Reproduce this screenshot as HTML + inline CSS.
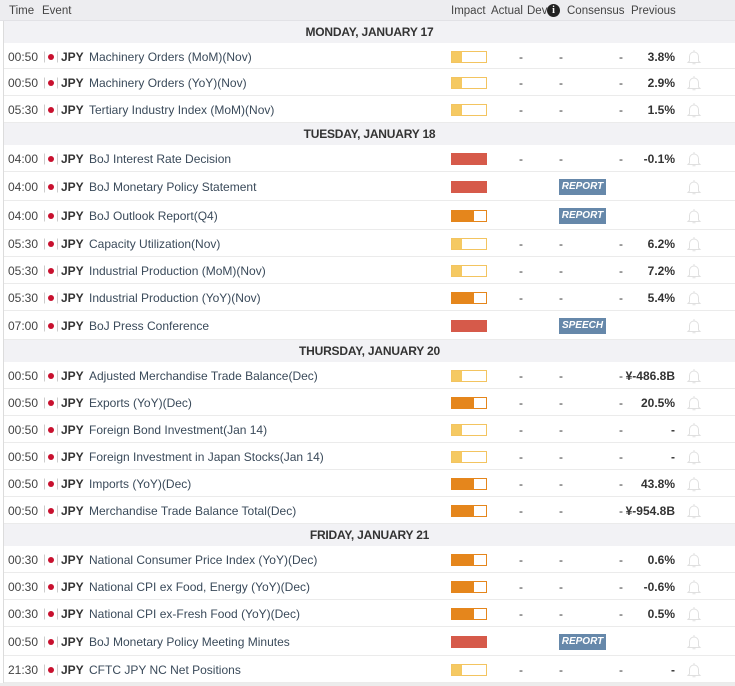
<!DOCTYPE html>
<html><head><meta charset="utf-8"><style>
*{margin:0;padding:0;box-sizing:border-box}
body{width:735px;height:686px;background:#fff;font-family:"Liberation Sans",Arial,sans-serif;font-size:12px;color:#333;position:relative;overflow:hidden}
.hdr{position:absolute;left:0;top:0;width:735px;height:21px;background:#ededf0;border-bottom:1px solid #e2e2e6;color:#444;font-size:11.5px}
.hdr span{position:absolute;top:5px}
.wrap{position:absolute;left:3px;top:21px;width:732px;height:662px;border-left:1px solid #dcdcdc;background:#fff}
.date{position:absolute;left:4px;width:731px;height:22px;background:#f2f2f5;text-align:center;font-weight:bold;font-size:12px;line-height:23px;color:#333;letter-spacing:-0.2px}
.row{position:absolute;left:4px;width:731px;border-bottom:1px solid #ebebeb}
.row>*{position:absolute;top:calc(50% + 1px);transform:translateY(-50%)}
.t{left:4px;color:#444}
.sep{left:40px;width:1px;height:11px;background:#ccc}
.dot{left:44px;width:6px;height:6px;border-radius:50%;background:#c8102e}
.sep2{left:53px;width:1px;height:11px;background:#ccc}
.c{left:57px;font-weight:bold;color:#333}
.e{left:85px;color:#3a4a5a}
.bar{left:447px;width:36px;height:12px}
.low{border:1.5px solid #f3c460;background:linear-gradient(90deg,#f5c962 10px,#fff 10px)}
.med{border:1.5px solid #e5861c;background:linear-gradient(90deg,#e5861c 22px,#fff 22px)}
.high{background:#d65a4a}
.d1{left:515px}.d2{left:555px}.d3{left:615px}
.p{right:60px;font-weight:bold;color:#333}
.b{left:555px;width:47px;height:16px;background:#6688aa;color:#fff;font-style:italic;font-weight:bold;font-size:10px;line-height:16px;text-align:center}
.bell{left:682px;width:16px;height:17px}
</style></head><body>
<div class="hdr"><span style="left:9px">Time</span><span style="left:42px">Event</span><span style="left:451px">Impact</span><span style="left:491px">Actual</span><span style="left:527px">Dev</span>
<span style="left:547px;top:4px;width:13px;height:13px;border-radius:50%;background:#222;color:#fff;font-weight:bold;font-size:10px;text-align:center;line-height:13px;font-family:'Liberation Serif',serif">i</span>
<span style="left:567px">Consensus</span><span style="left:631px">Previous</span></div>
<div class="wrap"></div>
<div id="c"></div>
<script>
var bell='<svg class="bell" viewBox="0 0 16 17"><path d="M3.5 12.5V8a4.5 4.5 0 0 1 9 0v4.5l1.5 1.5H2z M8 1.5v2 M6.5 15.3h3" fill="none" stroke="#e0e0e0" stroke-width="1"/></svg>';
var data=[
['D','MONDAY, JANUARY 17',21],
['00:50','Machinery Orders (MoM)(Nov)','low','3.8%',43,26],
['00:50','Machinery Orders (YoY)(Nov)','low','2.9%',69,27],
['05:30','Tertiary Industry Index (MoM)(Nov)','low','1.5%',96,27],
['D','TUESDAY, JANUARY 18',123],
['04:00','BoJ Interest Rate Decision','high','-0.1%',145,27],
['04:00','BoJ Monetary Policy Statement','high','R:REPORT',172,29],
['04:00','BoJ Outlook Report(Q4)','med','R:REPORT',201,29],
['05:30','Capacity Utilization(Nov)','low','6.2%',230,27],
['05:30','Industrial Production (MoM)(Nov)','low','7.2%',257,27],
['05:30','Industrial Production (YoY)(Nov)','med','5.4%',284,27],
['07:00','BoJ Press Conference','high','R:SPEECH',311,29],
['D','THURSDAY, JANUARY 20',340],
['00:50','Adjusted Merchandise Trade Balance(Dec)','low','¥-486.8B',362,27],
['00:50','Exports (YoY)(Dec)','med','20.5%',389,27],
['00:50','Foreign Bond Investment(Jan 14)','low','-',416,27],
['00:50','Foreign Investment in Japan Stocks(Jan 14)','low','-',443,27],
['00:50','Imports (YoY)(Dec)','med','43.8%',470,27],
['00:50','Merchandise Trade Balance Total(Dec)','med','¥-954.8B',497,27],
['D','FRIDAY, JANUARY 21',524],
['00:30','National Consumer Price Index (YoY)(Dec)','med','0.6%',546,27],
['00:30','National CPI ex Food, Energy (YoY)(Dec)','med','-0.6%',573,27],
['00:30','National CPI ex-Fresh Food (YoY)(Dec)','med','0.5%',600,27],
['00:50','BoJ Monetary Policy Meeting Minutes','high','R:REPORT',627,29],
['21:30','CFTC JPY NC Net Positions','low','-',656,27]];
var h='';
data.forEach(function(r){
if(r[0]=='D'){h+='<div class="date" style="top:'+r[2]+'px">'+r[1]+'</div>';return;}
h+='<div class="row" style="top:'+r[4]+'px;height:'+r[5]+'px"><span class="t">'+r[0]+'</span><span class="sep"></span><span class="dot"></span><span class="sep2"></span><span class="c">JPY</span><span class="e">'+r[1]+'</span><span class="bar '+r[2]+'"></span>';
if(r[3].indexOf('R:')==0){h+='<span class="b">'+r[3].slice(2)+'</span>';}
else{h+='<span class="d1">-</span><span class="d2">-</span><span class="d3">-</span><span class="p">'+r[3]+'</span>';}
h+=bell+'</div>';});
h+='<div style="position:absolute;left:0;top:683px;width:735px;height:3px;background:#ececec"></div>';
document.getElementById('c').innerHTML=h;
</script>
</body></html>
